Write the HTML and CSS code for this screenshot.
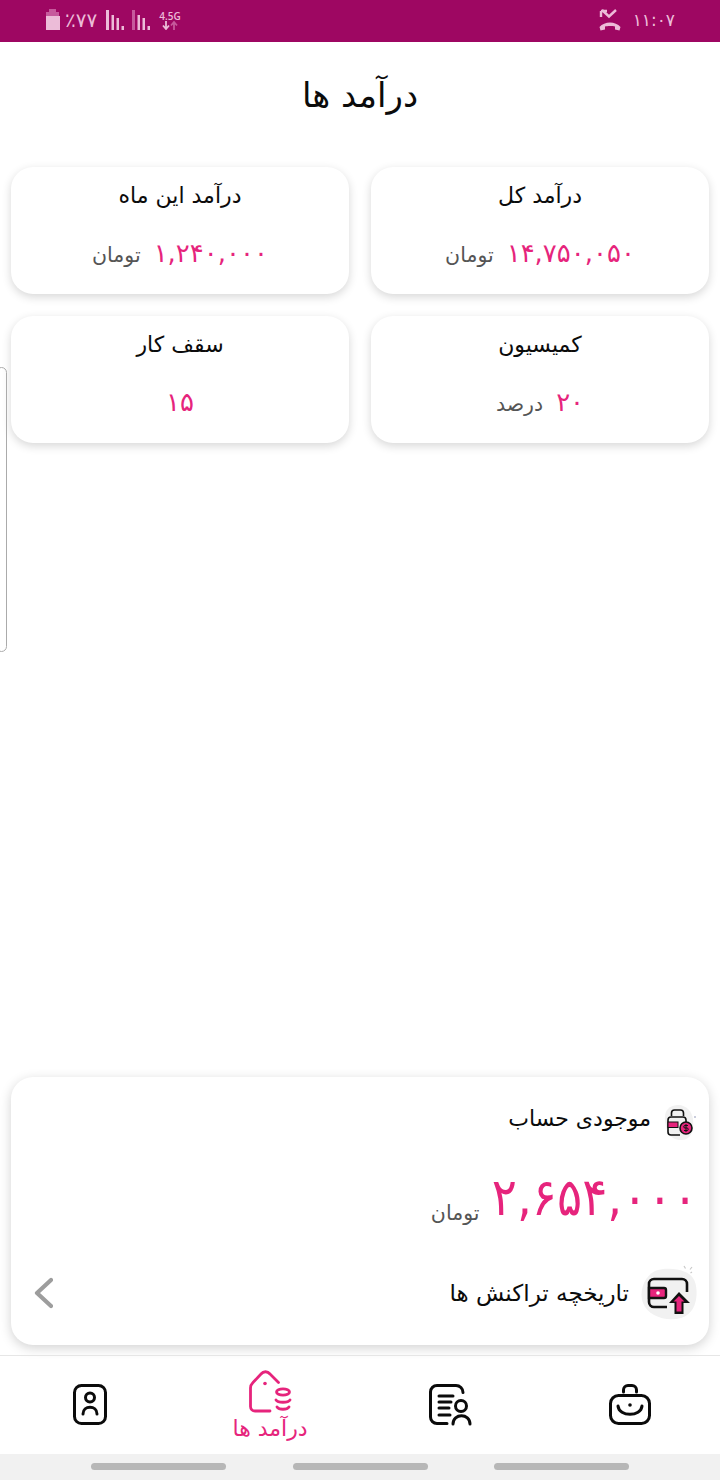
FILE: index.html
```html
<!DOCTYPE html>
<html lang="fa" dir="rtl">
<head>
<meta charset="utf-8">
<title>درآمد ها</title>
<link rel="stylesheet" href="styles.css">
</head>
<body>
<div class="page">
  <header class="status" dir="ltr">
    <div class="status-left">
      <svg class="battery" width="15" height="22" viewBox="0 0 15 22"><path d="M4 0h7v3H4z" fill="#c65a9c"/><path d="M1 3h13v4H1z" fill="#c65a9c"/><rect x="1" y="7" width="14" height="14" fill="#ecbcd8"/></svg>
      <span class="pct" dir="rtl">٪۷۷</span>
      <svg class="signal" width="20" height="22" viewBox="0 0 20 22"><g fill="#ecbcd8"><rect x="0" y="1" width="3" height="20"/><rect x="5.500" y="6" width="2.500" height="15"/><rect x="10.500" y="9" width="2.500" height="12"/><rect x="15.500" y="17" width="2.500" height="4"/></g></svg>
      <svg class="signal signal-2" width="20" height="22" viewBox="0 0 20 22"><rect x="0" y="1" width="3" height="20" fill="#c65a9c"/><g fill="#ecbcd8"><rect x="5.500" y="6" width="2.500" height="15"/><rect x="10.500" y="9" width="2.500" height="12"/><rect x="15.500" y="17" width="2.500" height="4"/></g></svg>
      <div class="net">
        <span class="net-label">4.5G</span>
        <svg width="16" height="9" viewBox="0 0 16 9"><path d="M4 0v7M1 4.500l3 3.500 3-3.500" fill="none" stroke="#ecbcd8" stroke-width="1.800"/><path d="M12 9V2M9 4.500L12 1l3 3.500" fill="none" stroke="#c65a9c" stroke-width="1.800"/></svg>
      </div>
    </div>
    <div class="status-right">
      <svg width="22" height="22" viewBox="0 0 22 22"><path d="M3 1l7 6.500L17 1" fill="none" stroke="#ecbcd8" stroke-width="2.400"/><path d="M2 2h6M2 2v6" fill="none" stroke="#ecbcd8" stroke-width="2.400"/><path d="M0.500 18c5-6 16-6 21 0l-1 3.500-4.500-1v-3c-2-.8-8-.8-10 0v3l-4.500 1z" fill="#ecbcd8"/></svg>
      <span class="clock" dir="rtl">۱۱:۰۷</span>
    </div>
  </header>

  <h1 class="title">درآمد ها</h1>

  <main class="main">
    <section class="stats">
      <article class="card">
        <h2 class="card-title">درآمد کل</h2>
        <p class="card-value"><span class="num">۱۴,۷۵۰,۰۵۰</span><span class="unit">تومان</span></p>
      </article>
      <article class="card">
        <h2 class="card-title">درآمد این ماه</h2>
        <p class="card-value"><span class="num">۱,۲۴۰,۰۰۰</span><span class="unit">تومان</span></p>
      </article>
      <article class="card">
        <h2 class="card-title">کمیسیون</h2>
        <p class="card-value"><span class="num">۲۰</span><span class="unit">درصد</span></p>
      </article>
      <article class="card">
        <h2 class="card-title">سقف کار</h2>
        <p class="card-value"><span class="num">۱۵</span></p>
      </article>
    </section>

    <section class="balance">
      <div class="balance-head">
        <svg class="balance-icon" width="36" height="36" viewBox="0 0 36 36">
          <path d="M15 1c8-1 15 6 16 14s0 20-11 21S4 28 3 17 7 2 15 1z" fill="#f1f1f1"/>
          <circle cx="33" cy="13" r="1" fill="#b9bdd0"/>
          <path d="M9.500 12V9a3 3 0 0 1 3-3h6a3 3 0 0 1 3 3v3M18 31H9a3 3 0 0 1-3-3V16a3 3 0 0 1 3-3h12a3 3 0 0 1 3 3v2" fill="none" stroke="#111" stroke-width="1.600"/>
          <rect x="6" y="18" width="10" height="5.500" fill="#e6247c" stroke="#111" stroke-width="1"/>
          <circle cx="24" cy="24" r="6" fill="#e6247c" stroke="#111" stroke-width="1.600"/>
          <path d="M26 21.500h-3a1.200 1.200 0 0 0 0 2.500h2a1.200 1.200 0 0 1 0 2.500h-3M24 20v8" fill="none" stroke="#111" stroke-width="1"/>
        </svg>
        <span class="balance-label">موجودی حساب</span>
      </div>
      <p class="balance-amount"><span class="balance-num">۲,۶۵۴,۰۰۰</span><span class="unit">تومان</span></p>
      <div class="history">
        <svg class="history-icon" width="58" height="58" viewBox="0 0 58 58">
          <path d="M18 6c12-3 33-1 37 12s1 32-14 36-33-2-38-15S6 9 18 6z" fill="#f1f1f1"/>
          <path d="M44 2l1.500 2.500M52 3l-2 2.500M52 8l-1.500 1" stroke="#c8c8c8" stroke-width="1.200"/>
          <path d="M27 43H14a5 5 0 0 1-5-5V20a5 5 0 0 1 5-5h28a5 5 0 0 1 5 5v8" fill="none" stroke="#111" stroke-width="2.600"/>
          <path d="M9 24h15a2 2 0 0 1 2 2v6a2 2 0 0 1-2 2H9z" fill="#e6247c" stroke="#111" stroke-width="2.400"/>
          <circle cx="18" cy="29" r="1.800" fill="#fff"/>
          <path d="M39 28L29 39h5.500v11h9V39H50z" fill="#111"/>
          <path d="M39 32l-5.500 5.500h3v10h5v-10h3z" fill="#e6247c"/>
        </svg>
        <span class="history-label">تاریخچه تراکنش ها</span>
        <svg class="chevron" width="24" height="34" viewBox="0 0 24 34"><path d="M22 4L8 17l14 13" fill="none" stroke="#9d9d9d" stroke-width="4.200" stroke-linecap="round" stroke-linejoin="round"/></svg>
      </div>
    </section>
  </main>

  <nav class="tabs">
    <div class="tab">
      <svg width="44" height="44" viewBox="0 0 44 44" fill="none" stroke="#0b0b0b" stroke-width="3" stroke-linecap="round" stroke-linejoin="round"><path d="M15.500 9V7a4.500 4.500 0 0 1 4.500-4.500h4A4.500 4.500 0 0 1 28.500 7v2"/><rect x="2.500" y="12.500" width="39" height="28" rx="8"/><path d="M10 23c1 11 23 11 24 0"/><circle cx="22" cy="22" r="1.800" fill="#0b0b0b" stroke="none"/></svg>
    </div>
    <div class="tab">
      <svg width="44" height="44" viewBox="0 0 44 44" fill="none" stroke="#0b0b0b" stroke-width="3" stroke-linecap="round" stroke-linejoin="round"><path d="M19 40.500H9a6.500 6.500 0 0 1-6.500-6.500V9A6.500 6.500 0 0 1 9 2.500h19A7 7 0 0 1 35 9.500"/><path d="M11 13h14M11 19h12M11 25h10M11 32h11"/><circle cx="33" cy="23" r="5.500"/><path d="M25 41c0-11 17-11 17 0"/></svg>
    </div>
    <div class="tab tab-active">
      <svg width="44" height="44" viewBox="0 0 44 44" fill="none" stroke="#e6247c" stroke-width="2.800" stroke-linecap="round" stroke-linejoin="round"><path d="M22 42H7a4.500 4.500 0 0 1-4.500-4.500V19c0-2.500 .5-3.500 2.500-5.500L13 5c2.500-3 6.500-3 9 0l8.500 8.500"/><circle cx="17" cy="14.500" r="1.800" fill="#e6247c" stroke="none"/><ellipse cx="35" cy="23" rx="6.500" ry="3.200"/><path d="M28 31c2 3 12 3 14 0M29 38c2 3 10 3 12 0"/></svg>
      <span class="tab-label">درآمد ها</span>
    </div>
    <div class="tab">
      <svg width="44" height="44" viewBox="0 0 44 44" fill="none" stroke="#0b0b0b" stroke-width="3" stroke-linecap="round" stroke-linejoin="round"><rect x="6.500" y="2.500" width="31" height="38" rx="7"/><circle cx="22" cy="14.500" r="4.500"/><path d="M15 31c0-9 14-9 14 0"/></svg>
    </div>
  </nav>

  <footer class="home-bar">
    <span class="pill"></span>
    <span class="pill"></span>
    <span class="pill"></span>
  </footer>

  <div class="edge-handle"></div>
</div>
</body>
</html>
```
FILE: styles.css
```css
* {
  box-sizing: border-box;
  margin: 0;
  padding: 0;
}

html,
body {
  width: 720px;
  height: 1480px;
  background: #fff;
  overflow: hidden;
}

body {
  font-family: "DejaVu Sans", "Noto Sans", sans-serif;
  color: #0b0b0b;
}

.page {
  position: relative;
  display: flex;
  flex-direction: column;
  height: 1480px;
}

.status {
  flex: none;
  display: flex;
  justify-content: space-between;
  align-items: center;
  height: 42px;
  padding: 0 45px 2px 45px;
  background: #9e0762;
  color: #ecbcd8;
}

.status-left,
.status-right {
  display: flex;
  align-items: center;
}

.pct {
  margin-left: 5px;
  font-size: 20px;
  line-height: 22px;
}

.signal {
  margin-left: 9px;
}

.signal-2 {
  margin-left: 6px;
}

.net {
  display: flex;
  flex-direction: column;
  align-items: center;
  margin-left: 7px;
  line-height: 1;
}

.net-label {
  font-family: "Open Sans", sans-serif;
  font-size: 10px;
  font-weight: 600;
}

.clock {
  margin-left: 12px;
  font-size: 17px;
}

.title {
  flex: none;
  height: 125px;
  padding-top: 30px;
  font-size: 34px;
  font-weight: 400;
  line-height: 46px;
  text-align: center;
}

.main {
  flex: 1;
  display: flex;
  flex-direction: column;
  justify-content: space-between;
  padding: 0 11px 10px;
}

.stats {
  display: grid;
  grid-template-columns: 1fr 1fr;
  gap: 22px;
}

.card {
  display: flex;
  flex-direction: column;
  align-items: center;
  height: 127px;
  padding-top: 13px;
  background: #fff;
  border-radius: 22px;
  box-shadow: 0 3px 10px rgba(0, 0, 0, 0.16);
}

.card-title {
  font-size: 22px;
  font-weight: 400;
  line-height: 32px;
}

.card-value {
  display: flex;
  align-items: center;
  gap: 13px;
  min-height: 37px;
  margin-top: 22px;
  line-height: 32px;
}

.num {
  font-size: 26px;
  color: #e6247c;
}

.unit {
  padding-top: 5px;
  font-size: 20.500px;
  color: #555;
}

.balance {
  height: 268px;
  padding: 24px 11px 0 18px;
  background: #fff;
  border-radius: 22px;
  box-shadow: 0 3px 12px rgba(0, 0, 0, 0.18);
}

.balance-head {
  display: flex;
  align-items: flex-start;
  gap: 11px;
}

.balance-icon {
  margin-top: 3px;
}

.balance-label {
  font-size: 22px;
  line-height: 36px;
}

.history-label {
  font-size: 23px;
}

.balance-amount {
  display: flex;
  align-items: flex-end;
  gap: 12px;
  margin-top: 32px;
  line-height: 50px;
}

.balance-num {
  display: inline-block;
  margin-left: -22px;
  font-size: 52px;
  color: #e6247c;
  transform: scaleX(0.9);
  transform-origin: right center;
}

.balance-amount .unit {
  padding-top: 0;
  line-height: 18px;
}

.history {
  display: flex;
  align-items: center;
  gap: 11px;
  margin-top: 42px;
}

.chevron {
  margin-right: auto;
}

.tabs {
  flex: none;
  display: grid;
  grid-template-columns: repeat(4, 1fr);
  height: 99px;
  border-top: 1px solid #e6e6e6;
  padding-top: 13px;
}

.tab {
  display: flex;
  flex-direction: column;
  align-items: center;
  padding-top: 14px;
}

.tab-active {
  padding-top: 0;
}

.tab-label {
  margin-top: 3px;
  font-size: 22px;
  line-height: 26px;
  color: #e6247c;
}

.home-bar {
  flex: none;
  display: flex;
  justify-content: space-between;
  height: 26px;
  padding: 9px 91px 0;
  background: #f1f1f1;
}

.pill {
  width: 135px;
  height: 7px;
  border-radius: 4px;
  background: #b7b7b7;
}

.edge-handle {
  position: absolute;
  top: 367px;
  left: -4px;
  width: 11px;
  height: 285px;
  border: 1px solid #ababab;
  border-radius: 6px;
}
```
